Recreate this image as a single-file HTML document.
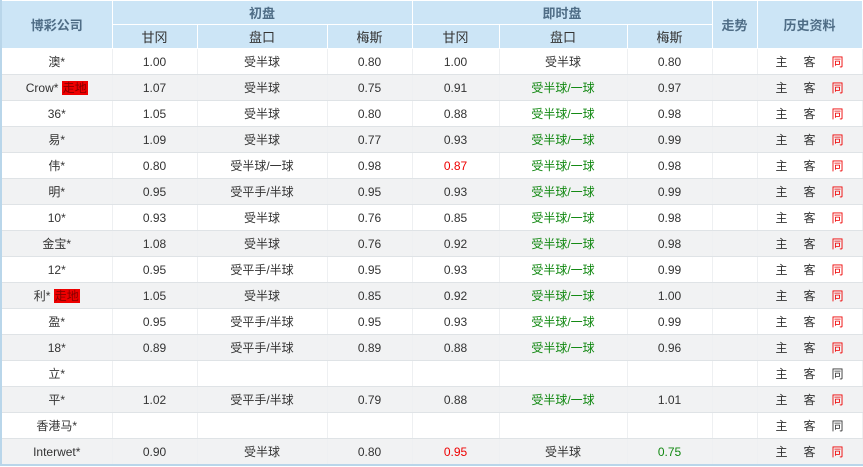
<!DOCTYPE html>
<html><head><meta charset="utf-8"><style>
body{margin:0;background:#fff;width:863px;height:467px;overflow:hidden;font-family:"Liberation Sans","Noto Sans CJK SC",sans-serif;font-size:12px;color:#333}
table{border-collapse:collapse;table-layout:fixed;width:862px;position:absolute;left:0;top:0;border-left:2px solid #b9d6ea;border-bottom:2px solid #b9d6ea}
th{background:#cce5f6;color:#4f6d86;font-weight:bold;font-size:13px;border:1px solid #fff;height:23px;padding:0}
th.s{font-weight:normal;color:#333;font-size:13px}
td{height:25px;border-bottom:1px solid #dfe3e6;border-right:1px solid #eef0f2;text-align:center;padding:0;white-space:nowrap}
tr.g td{background:#f1f2f3}
.r{color:#e00}.gr{color:#118811}
.zd{background:#e00;color:#800;padding:0 1px}
.h span{margin:0 8px}
</style></head><body>
<table>
<colgroup><col style="width:111px"><col style="width:85px"><col style="width:130px"><col style="width:85px"><col style="width:87px"><col style="width:128px"><col style="width:85px"><col style="width:45px"><col style="width:105px"></colgroup>
<tr><th rowspan="2">博彩公司</th><th colspan="3">初盘</th><th colspan="3">即时盘</th><th rowspan="2" style="vertical-align:top;padding-top:14px">走势</th><th rowspan="2">历史资料</th></tr>
<tr><th class="s">甘冈</th><th class="s">盘口</th><th class="s">梅斯</th><th class="s">甘冈</th><th class="s">盘口</th><th class="s">梅斯</th></tr>
<tr><td>澳*</td><td>1.00</td><td>受半球</td><td>0.80</td><td>1.00</td><td>受半球</td><td>0.80</td><td></td><td class="h"><span>主</span><span>客</span><span class="r">同</span></td></tr>
<tr class="g"><td>Crow* <span class="zd">走地</span></td><td>1.07</td><td>受半球</td><td>0.75</td><td>0.91</td><td class="gr">受半球/一球</td><td>0.97</td><td></td><td class="h"><span>主</span><span>客</span><span class="r">同</span></td></tr>
<tr><td>36*</td><td>1.05</td><td>受半球</td><td>0.80</td><td>0.88</td><td class="gr">受半球/一球</td><td>0.98</td><td></td><td class="h"><span>主</span><span>客</span><span class="r">同</span></td></tr>
<tr class="g"><td>易*</td><td>1.09</td><td>受半球</td><td>0.77</td><td>0.93</td><td class="gr">受半球/一球</td><td>0.99</td><td></td><td class="h"><span>主</span><span>客</span><span class="r">同</span></td></tr>
<tr><td>伟*</td><td>0.80</td><td>受半球/一球</td><td>0.98</td><td class="r">0.87</td><td class="gr">受半球/一球</td><td>0.98</td><td></td><td class="h"><span>主</span><span>客</span><span class="r">同</span></td></tr>
<tr class="g"><td>明*</td><td>0.95</td><td>受平手/半球</td><td>0.95</td><td>0.93</td><td class="gr">受半球/一球</td><td>0.99</td><td></td><td class="h"><span>主</span><span>客</span><span class="r">同</span></td></tr>
<tr><td>10*</td><td>0.93</td><td>受半球</td><td>0.76</td><td>0.85</td><td class="gr">受半球/一球</td><td>0.98</td><td></td><td class="h"><span>主</span><span>客</span><span class="r">同</span></td></tr>
<tr class="g"><td>金宝*</td><td>1.08</td><td>受半球</td><td>0.76</td><td>0.92</td><td class="gr">受半球/一球</td><td>0.98</td><td></td><td class="h"><span>主</span><span>客</span><span class="r">同</span></td></tr>
<tr><td>12*</td><td>0.95</td><td>受平手/半球</td><td>0.95</td><td>0.93</td><td class="gr">受半球/一球</td><td>0.99</td><td></td><td class="h"><span>主</span><span>客</span><span class="r">同</span></td></tr>
<tr class="g"><td>利* <span class="zd">走地</span></td><td>1.05</td><td>受半球</td><td>0.85</td><td>0.92</td><td class="gr">受半球/一球</td><td>1.00</td><td></td><td class="h"><span>主</span><span>客</span><span class="r">同</span></td></tr>
<tr><td>盈*</td><td>0.95</td><td>受平手/半球</td><td>0.95</td><td>0.93</td><td class="gr">受半球/一球</td><td>0.99</td><td></td><td class="h"><span>主</span><span>客</span><span class="r">同</span></td></tr>
<tr class="g"><td>18*</td><td>0.89</td><td>受平手/半球</td><td>0.89</td><td>0.88</td><td class="gr">受半球/一球</td><td>0.96</td><td></td><td class="h"><span>主</span><span>客</span><span class="r">同</span></td></tr>
<tr><td>立*</td><td></td><td></td><td></td><td></td><td></td><td></td><td></td><td class="h"><span>主</span><span>客</span><span>同</span></td></tr>
<tr class="g"><td>平*</td><td>1.02</td><td>受平手/半球</td><td>0.79</td><td>0.88</td><td class="gr">受半球/一球</td><td>1.01</td><td></td><td class="h"><span>主</span><span>客</span><span class="r">同</span></td></tr>
<tr><td>香港马*</td><td></td><td></td><td></td><td></td><td></td><td></td><td></td><td class="h"><span>主</span><span>客</span><span>同</span></td></tr>
<tr class="g"><td>Interwet*</td><td>0.90</td><td>受半球</td><td>0.80</td><td class="r">0.95</td><td>受半球</td><td class="gr">0.75</td><td></td><td class="h"><span>主</span><span>客</span><span class="r">同</span></td></tr>
</table>
</body></html>
